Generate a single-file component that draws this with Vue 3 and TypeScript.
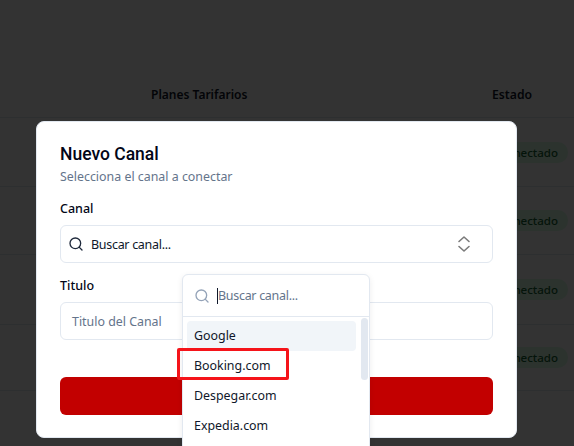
<script setup lang="ts">
const rows: number[] = [69, 68, 70, 66]
const items: string[] = ['Google', 'Booking.com', 'Despegar.com', 'Expedia.com']
</script>

<template>
  <div class="page">
    <div class="table">
      <div class="thead">
        <span class="th-plans">Planes Tarifarios</span>
        <span class="th-state">Estado</span>
      </div>
      <div v-for="(h, i) in rows" :key="i" class="row" :style="{ height: h + 'px' }">
        <span class="badge">Conectado</span>
      </div>
    </div>
    <div class="scrim"></div>
    <section class="modal">
      <h2 class="title">Nuevo Canal</h2>
      <p class="subtitle">Selecciona el canal a conectar</p>
      <div class="label first">Canal</div>
      <div class="field select">
        <svg class="search-icon" viewBox="0 0 24 24" width="16" height="16">
          <circle cx="11" cy="11" r="8" />
          <path d="m21 21-4.3-4.3" />
        </svg>
        <span class="select-text">Buscar canal...</span>
        <svg class="chevrons" viewBox="0 0 24 24" width="24" height="24">
          <path d="m7 14.5 5 4.5 5-4.5" />
          <path d="m7 9.5 5-4.5 5 4.5" />
        </svg>
      </div>
      <div class="label second">Titulo</div>
      <div class="field text-field">Titulo del Canal</div>
      <div class="submit"></div>
    </section>
    <div class="dropdown">
      <div class="dd-search">
        <svg class="dd-icon" viewBox="0 0 24 24" width="16" height="16">
          <circle cx="11" cy="11" r="8" />
          <path d="m21 21-4.3-4.3" />
        </svg>
        <span class="caret"></span>
        <span class="dd-placeholder">Buscar canal...</span>
      </div>
      <div class="dd-list">
        <div v-for="(item, i) in items" :key="item" class="dd-item" :class="{ active: i === 0 }">{{ item }}</div>
        <div class="thumb"></div>
      </div>
    </div>
    <div class="highlight"></div>
  </div>
</template>

<style>
html, body { margin: 0; background: #fff; }
</style>

<style scoped>
.page {
  position: relative;
  width: 574px;
  height: 446px;
  overflow: hidden;
  background: #fff;
  font-family: "Noto Sans", "Open Sans", sans-serif;
  font-size: 14px;
  color: #0f172a;
}
.thead {
  position: relative;
  height: 118px;
  border-bottom: 1px solid #e2e8f0;
  box-sizing: border-box;
  font-weight: 600;
  color: #0f172a;
}
.th-plans { position: absolute; left: 151px; top: 85px; line-height: 20px; font-size: 12px; }
.th-state { position: absolute; left: 492px; top: 85px; line-height: 20px; font-size: 12.2px; }
.row {
  display: flex;
  align-items: center;
  justify-content: flex-end;
  box-sizing: border-box;
  border-bottom: 1px solid #e2e8f0;
  padding-right: 6px;
}
.badge {
  background: #dcfce7;
  color: #166534;
  border-radius: 10px;
  padding: 0 10px;
  font-size: 11.5px;
  font-weight: 500;
  line-height: 21px;
  white-space: nowrap;
}
.scrim { position: absolute; inset: 0; background: rgba(0, 0, 0, 0.8); }
.modal {
  position: absolute;
  left: 36px;
  top: 121px;
  width: 481px;
  height: 317px;
  box-sizing: border-box;
  padding: 22px 23px 0;
  background: #fff;
  border: 1px solid #e2e8f0;
  border-radius: 8px;
}
.title {
  margin: 0;
  font-family: Roboto, "Noto Sans", sans-serif;
  font-size: 17.5px;
  font-weight: 500;
  line-height: 20px;
  color: #020617;
}
.subtitle { margin: 3px 0 0; font-size: 12.4px; line-height: 20px; color: #64748b; }
.label { font-size: 12.5px; font-weight: 500; line-height: 20px; color: #020617; }
.label.first { margin-top: 12px; }
.label.second { margin-top: 13px; }
.field {
  box-sizing: border-box;
  height: 38px;
  margin-top: 6px;
  border: 1px solid #e2e8f0;
  border-radius: 6px;
  display: flex;
  align-items: center;
  background: #fff;
}
.select { padding: 0 16px 0 7px; }
.search-icon { fill: none; stroke: #1e293b; stroke-width: 2; stroke-linecap: round; stroke-linejoin: round; flex: none; }
.select-text { margin-left: 7px; font-size: 12.5px; letter-spacing: -0.3px; color: #0f172a; flex: 1; }
.chevrons { fill: none; stroke: #7b7b7b; stroke-width: 1.6; stroke-linecap: round; stroke-linejoin: round; flex: none; }
.text-field { padding: 0 11px; font-size: 12.4px; color: #64748b; }
.submit { height: 38px; margin-top: 37px; background: #c20000; border-radius: 6px; }
.dropdown {
  position: absolute;
  left: 182px;
  top: 274px;
  width: 188px;
  height: 190px;
  box-sizing: border-box;
  background: #fff;
  border: 1px solid #e2e8f0;
  border-radius: 6px;
  box-shadow: 0 2px 6px rgba(15, 23, 42, 0.08);
}
.dd-search {
  display: flex;
  align-items: center;
  height: 42px;
  box-sizing: border-box;
  padding-left: 11px;
  border-bottom: 1px solid #e2e8f0;
}
.dd-icon { fill: none; stroke: #94a3b8; stroke-width: 2; stroke-linecap: round; stroke-linejoin: round; flex: none; }
.caret { width: 1px; height: 16px; margin-left: 7px; background: #0f172a; }
.dd-placeholder { font-size: 12.5px; letter-spacing: -0.3px; color: #64748b; }
.dd-list { position: relative; padding: 4px; }
.dd-item {
  height: 30px;
  width: 169px;
  box-sizing: border-box;
  padding: 0 0 2px 7px;
  display: flex;
  align-items: center;
  font-size: 12.4px;
  color: #0f172a;
  border-radius: 4px;
}
.dd-item.active { background: #f1f5f9; }
.thumb {
  position: absolute;
  right: 1px;
  top: 1px;
  width: 7px;
  height: 62px;
  border-radius: 4px;
  background: #e2e8f0;
}
.highlight {
  position: absolute;
  left: 177px;
  top: 348px;
  width: 112px;
  height: 32px;
  box-sizing: border-box;
  border: 3px solid #f5141a;
  border-radius: 2px;
}
</style>
